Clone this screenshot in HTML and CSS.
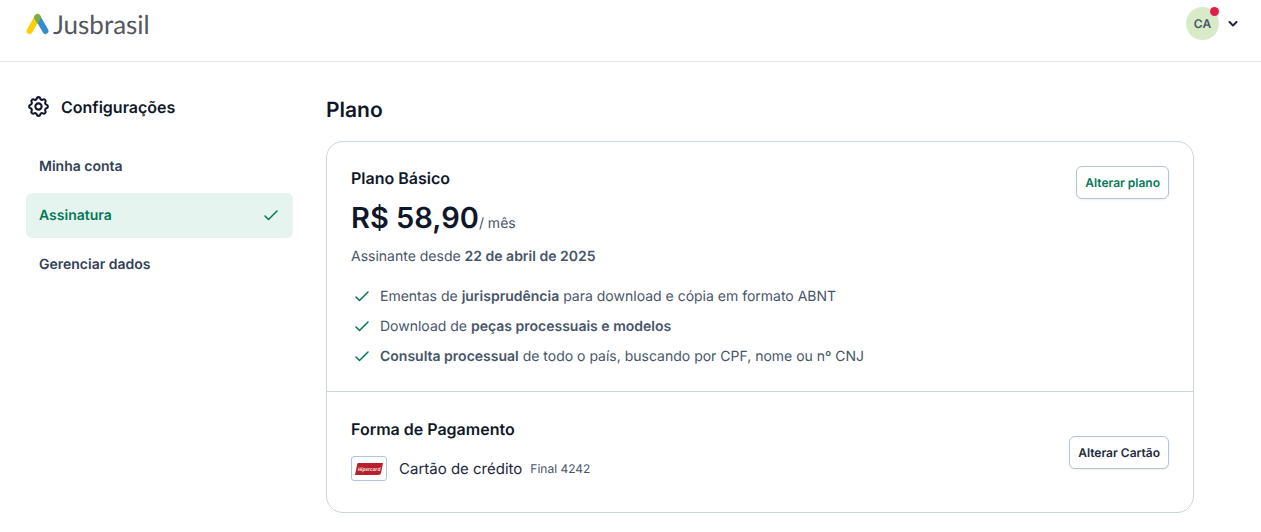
FILE: index.html
```html
<!DOCTYPE html>
<html lang="pt-BR">
<head>
  <meta charset="UTF-8" />
  <meta name="viewport" content="width=device-width, initial-scale=1.0" />
  <title>Assinatura - Jusbrasil</title>
  <link rel="stylesheet" href="styles.css">
</head>
<body>
  <header class="topbar">
    <a class="logo" href="#">
      <svg width="23" height="22" viewBox="0 0 23 22" fill="none" stroke-width="6" stroke-linecap="round">
        <path d="M11.500 4L19.500 18" stroke="#368dcc" />
        <path d="M11.500 4L3.500 18" stroke="#ffcf05" />
        <path d="M11.500 1a3 3 0 0 1 2.700 1.600l1 2-3.700 6.400-3.700-6.400 1.100-2A3 3 0 0 1 11.500 1z" fill="#76b043" />
      </svg>
      <span>Jusbrasil</span>
    </a>
    <button class="user-menu" type="button" aria-label="Menu do usuário">
      <span class="avatar">CA<i class="badge"></i></span>
      <svg width="10" height="6" viewBox="0 0 10 6" fill="none" stroke="#1e293b" stroke-width="2" stroke-linecap="round" stroke-linejoin="round"><path d="M1.500 1L5 4.500 8.500 1" /></svg>
    </button>
  </header>

  <div class="layout">
    <aside class="sidebar">
      <h2 class="sidebar-title">
        <svg width="25" height="25" viewBox="0 0 24 24" fill="none" stroke="#0f172a" stroke-width="2" stroke-linecap="round" stroke-linejoin="round">
          <path d="M10.325 4.317c.426-1.756 2.924-1.756 3.350 0a1.724 1.724 0 0 0 2.573 1.066c1.543-.94 3.310.826 2.370 2.370a1.724 1.724 0 0 0 1.065 2.572c1.756.426 1.756 2.924 0 3.350a1.724 1.724 0 0 0-1.066 2.573c.94 1.543-.826 3.310-2.370 2.370a1.724 1.724 0 0 0-2.572 1.065c-.426 1.756-2.924 1.756-3.350 0a1.724 1.724 0 0 0-2.573-1.066c-1.543.94-3.310-.826-2.370-2.370a1.724 1.724 0 0 0-1.065-2.572c-1.756-.426-1.756-2.924 0-3.350a1.724 1.724 0 0 0 1.066-2.573c-.94-1.543.826-3.310 2.370-2.370 1 .608 2.296.07 2.572-1.065z" />
          <circle cx="12" cy="12" r="3" />
        </svg>
        Configurações
      </h2>
      <nav class="menu">
        <a href="#">Minha conta</a>
        <a class="active" href="#">
          Assinatura
          <svg class="check" viewBox="0 0 28 22"><path d="M2 12L9 19 26 2" /></svg>
        </a>
        <a href="#">Gerenciar dados</a>
      </nav>
    </aside>

    <main class="content">
      <h1>Plano</h1>
      <div class="card">
        <section class="card-section">
          <div>
            <h3>Plano Básico</h3>
            <p class="price"><strong>R$ 58,90</strong>/ mês</p>
            <p class="since">Assinante desde <b>22 de abril de 2025</b></p>
            <ul class="features">
              <li><svg class="check" viewBox="0 0 28 22"><path d="M2 12L9 19 26 2" /></svg><span>Ementas de <b>jurisprudência</b> para download e cópia em formato ABNT</span></li>
              <li><svg class="check" viewBox="0 0 28 22"><path d="M2 12L9 19 26 2" /></svg><span>Download de <b>peças processuais e modelos</b></span></li>
              <li><svg class="check" viewBox="0 0 28 22"><path d="M2 12L9 19 26 2" /></svg><span><b>Consulta processual</b> de todo o país, buscando por CPF, nome ou nº CNJ</span></li>
            </ul>
          </div>
          <button class="btn btn-green" type="button">Alterar plano</button>
        </section>
        <section class="card-section payment">
          <div>
            <h3>Forma de Pagamento</h3>
            <div class="method">
              <span class="brand">
                <svg width="30" height="14" viewBox="0 0 30 14">
                  <path d="M4 1H29L27 11Q26.500 13 24.500 13H1L3 3Q3.300 1 4 1z" fill="#b8202b" />
                  <text x="15" y="9" text-anchor="middle">Hipercard</text>
                </svg>
              </span>
              <span class="method-name">Cartão de crédito</span>
              <span class="method-final">Final 4242</span>
            </div>
          </div>
          <button class="btn" type="button">Alterar Cartão</button>
        </section>
      </div>
    </main>
  </div>
</body>
</html>
```
FILE: styles.css
```css
* {
  margin: 0;
  padding: 0;
  box-sizing: border-box;
}

body {
  font-family: Inter, 'Liberation Sans', sans-serif;
  font-size: 14px;
  line-height: 20px;
  color: #475569;
  background: #fff;
  text-rendering: geometricPrecision;
}

a {
  color: inherit;
  text-decoration: none;
}

button {
  font-family: inherit;
  text-rendering: inherit;
  background: #fff;
  border: none;
  cursor: pointer;
}

b {
  font-weight: 600;
}

.topbar {
  display: flex;
  justify-content: space-between;
  align-items: center;
  padding: 0 23px 14px 26px;
  height: 62px;
  border-bottom: 1px solid #e2e4f0;
}

.logo {
  display: flex;
  align-items: center;
  gap: 4px;
  font-family: Lato, sans-serif;
  font-size: 26px;
  color: #54565f;
}

.user-menu {
  display: flex;
  align-items: center;
  gap: 9px;
}

.avatar {
  position: relative;
  width: 33px;
  height: 33px;
  border-radius: 50%;
  background: #d9eac8;
  color: #475569;
  font-size: 12px;
  font-weight: 600;
  line-height: 33px;
  text-align: center;
}

.badge {
  position: absolute;
  top: 0;
  right: 0;
  width: 9px;
  height: 9px;
  border-radius: 50%;
  background: #e11d48;
}

.layout {
  display: grid;
  grid-template-columns: 267px 1fr;
  gap: 33px;
  padding: 32px 67px 19px 26px;
}

.sidebar-title {
  display: flex;
  align-items: center;
  gap: 10px;
  height: 25px;
  color: #0f172a;
  font-size: 16px;
  font-weight: 600;
}

.menu {
  display: flex;
  flex-direction: column;
  gap: 4px;
  margin-top: 25px;
  color: #334155;
  font-weight: 600;
}

.menu a {
  display: flex;
  align-items: center;
  justify-content: space-between;
  height: 45px;
  padding: 0 15px 0 13px;
  border-radius: 6px;
}

.menu .active {
  background: #e6f4ef;
  color: #047857;
}

.check {
  width: 14px;
  height: 11px;
  fill: none;
  stroke: #047857;
  stroke-width: 3;
  stroke-linecap: round;
  stroke-linejoin: round;
}

h1 {
  margin-bottom: 13px;
  color: #0f172a;
  font-size: 21px;
  font-weight: 600;
  line-height: 34px;
}

h3 {
  color: #0f172a;
  font-size: 16px;
  font-weight: 600;
  line-height: 24px;
}

.card {
  border: 1px solid #cbd5e1;
  border-radius: 17px;
}

.card-section {
  display: flex;
  justify-content: space-between;
  align-items: flex-start;
  padding: 24px;
}

.payment {
  align-items: center;
  padding-top: 25px;
  border-top: 1px solid #cbd5e1;
}

.price {
  margin-top: 10px;
  line-height: 36px;
}

.price strong {
  color: #0f172a;
  font-size: 29px;
  font-weight: 600;
}

.since {
  margin-top: 5px;
}

.features {
  display: grid;
  gap: 10px;
  margin-top: 20px;
  list-style: none;
}

.features li {
  display: flex;
  align-items: center;
  gap: 11px;
  padding-left: 4px;
}

.features .check {
  margin-bottom: 2px;
}

.btn {
  height: 33px;
  padding: 0 8px;
  border: 1px solid #b4c3d6;
  border-radius: 6px;
  box-shadow: 0 1px 2px rgba(15, 23, 42, 0.08);
  color: #1e293b;
  font-size: 12px;
  font-weight: 600;
}

.btn-green {
  color: #047857;
}

.method {
  display: flex;
  align-items: center;
  margin: 15px 0 7px;
}

.brand {
  display: flex;
  align-items: center;
  justify-content: center;
  width: 36px;
  height: 25px;
  margin-right: 12px;
  border: 1px solid #b4c3d6;
  border-radius: 3px;
}

.brand text {
  fill: #fff;
  font-family: 'Open Sans', sans-serif;
  font-size: 5px;
  font-style: italic;
  font-weight: 600;
}

.method-name {
  margin-right: 8px;
  color: #1e293b;
  font-size: 15px;
}

.method-final {
  font-size: 12px;
}
```
